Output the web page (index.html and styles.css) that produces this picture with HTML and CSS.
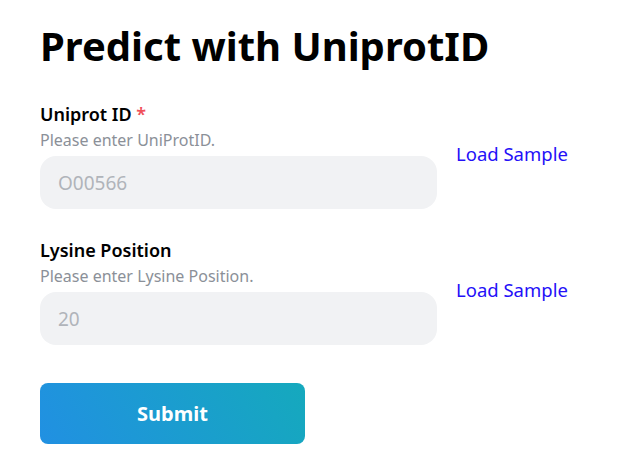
FILE: index.html
```html
<!DOCTYPE html>
<html>
<head>
<meta charset="utf-8">
<link rel="stylesheet" href="styles.css">
</head>
<body>
<main class="page">
  <h1 class="title">Predict with UniprotID</h1>
  <form class="form">
    <div class="row">
      <div class="field">
        <label class="label">Uniprot ID <span class="req">*</span></label>
        <div class="help">Please enter UniProtID.</div>
        <input class="input" type="text" placeholder="O00566">
      </div>
      <a class="sample">Load Sample</a>
    </div>
    <div class="row">
      <div class="field">
        <label class="label">Lysine Position</label>
        <div class="help">Please enter Lysine Position.</div>
        <input class="input" type="text" placeholder="20">
      </div>
      <a class="sample">Load Sample</a>
    </div>
    <button class="submit" type="button">Submit</button>
  </form>
</main>
</body>
</html>
```
FILE: styles.css
```css
* { box-sizing: border-box; }
html, body { margin: 0; padding: 0; background: #fff; }
body { font-family: "Noto Sans", "Open Sans", sans-serif; color: #000; }
.page { padding: 22px 40px; }
.title { margin: 0; font-size: 40px; line-height: 48px; font-weight: 700; }
.form { display: flex; flex-direction: column; gap: 29px; margin-top: 32px; }
.row { display: flex; align-items: center; gap: 19px; }
.field { width: 397px; display: flex; flex-direction: column; }
.label { font-size: 18px; line-height: 24px; font-weight: 600; }
.req { color: #f0505a; }
.help { font-size: 16px; line-height: 20px; color: #8b9098; margin-top: 4px; margin-bottom: 6px; }
.input { height: 53px; border: none; border-radius: 16px; background: #f1f2f4; padding: 0 18px; font-family: inherit; font-size: 19px; outline: none; }
.input::placeholder { color: #b0b4ba; }
.sample { font-size: 18.5px; color: #2410f8; cursor: pointer; margin-bottom: 4px; }
.submit { width: 265px; height: 61px; border: none; border-radius: 8px; background: linear-gradient(60deg, #2190e2, #15a9bd); color: #fff; font-family: inherit; font-size: 20px; font-weight: 700; margin-top: 9px; }
```
